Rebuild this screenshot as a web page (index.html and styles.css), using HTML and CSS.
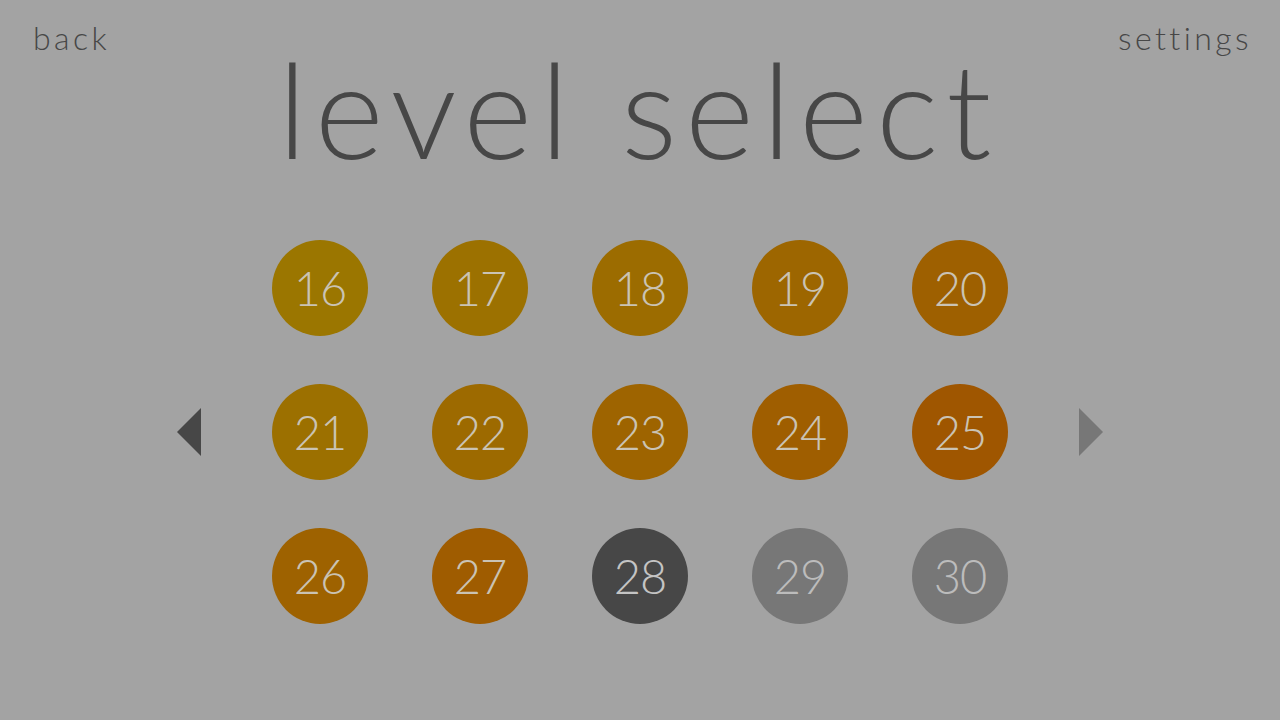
FILE: index.html
```html
<!DOCTYPE html>
<html lang="en">
<head>
<meta charset="utf-8">
<title>level select</title>
<link rel="stylesheet" href="styles.css">
</head>
<body>
<div class="screen">
  <header class="top">
    <a class="nav back">back</a>
    <h1 class="title">level select</h1>
    <a class="nav settings">settings</a>
  </header>
  <main class="picker">
    <svg class="arrow" width="26" height="50" viewBox="0 0 26 50"><polygon points="1,25 25,1 25,49" fill="#474747"/></svg>
    <div class="levels">
      <div class="lvl" style="background:#9b7600">16</div>
      <div class="lvl" style="background:#9c7100">17</div>
      <div class="lvl" style="background:#9c6c00">18</div>
      <div class="lvl" style="background:#9d6600">19</div>
      <div class="lvl" style="background:#9e6000">20</div>
      <div class="lvl" style="background:#9c7000">21</div>
      <div class="lvl" style="background:#9d6a00">22</div>
      <div class="lvl" style="background:#9e6400">23</div>
      <div class="lvl" style="background:#9f5e00">24</div>
      <div class="lvl" style="background:#9f5600">25</div>
      <div class="lvl" style="background:#9e6200">26</div>
      <div class="lvl" style="background:#9f5c00">27</div>
      <div class="lvl current">28</div>
      <div class="lvl locked">29</div>
      <div class="lvl locked">30</div>
    </div>
    <svg class="arrow" width="26" height="50" viewBox="0 0 26 50"><polygon points="1,1 25,25 1,49" fill="#777777"/></svg>
  </main>
</div>
</body>
</html>
```

FILE: styles.css
```css
html, body {
  margin: 0;
  padding: 0;
  background: #a3a3a3;
}
body {
  font-family: "Lato", "Open Sans", sans-serif;
  color: #474747;
}
.screen {
  width: 1280px;
  height: 720px;
  display: flex;
  flex-direction: column;
}
.top {
  display: grid;
  grid-template-columns: 1fr auto 1fr;
  align-items: start;
  padding: 0 28px 0 33px;
}
.nav {
  font-size: 32px;
  font-weight: 300;
  line-height: 1;
  margin-top: 22px;
  letter-spacing: 3.4px;
  color: #474747;
}
.back { justify-self: start; }
.settings { justify-self: end; }
.title {
  margin: 42px 8px 0 0;
  font-size: 132px;
  font-weight: 300;
  line-height: 1;
  letter-spacing: 8px;
  white-space: nowrap;
}
.picker {
  display: flex;
  align-items: center;
  justify-content: center;
  gap: 70px;
  margin-top: 66px;
}
.arrow { display: block; }
.levels {
  display: grid;
  grid-template-columns: repeat(5, 96px);
  grid-auto-rows: 96px;
  column-gap: 64px;
  row-gap: 48px;
}
.lvl {
  width: 96px;
  height: 96px;
  border-radius: 50%;
  display: flex;
  align-items: center;
  justify-content: center;
  font-size: 47px;
  font-weight: 300;
  color: #cac3b4;
  letter-spacing: -1px;
  padding-bottom: 1px;
  box-sizing: border-box;
}
.lvl.current { background: #474747; color: #c4c4c4; }
.lvl.locked { background: #777777; color: #bcbcbc; }
```
